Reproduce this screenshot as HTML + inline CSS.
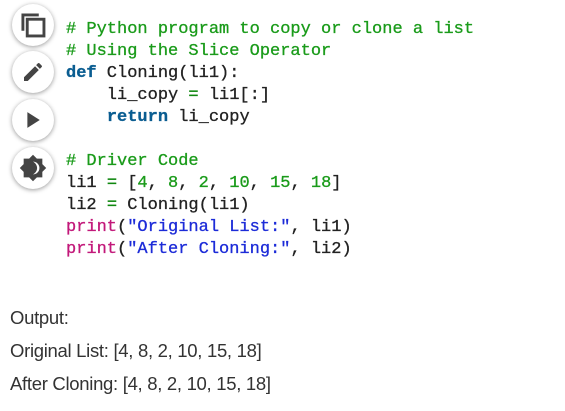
<!DOCTYPE html>
<html><head><style>
body{margin:0;width:565px;height:411px;background:#fff;position:relative;overflow:hidden}
.b{position:absolute;left:12px;width:42px;height:42px;border-radius:50%;background:#fff;box-shadow:0 1px 5px rgba(0,0,0,.4);display:flex;align-items:center;justify-content:center}
pre{position:absolute;left:66px;top:19px;margin:0;font:17px/22px "Liberation Mono",monospace;color:#222;-webkit-text-stroke:0.3px}
.c{color:#1a9b1a}.k{color:#0a5d91;font-weight:bold}.o{color:#118811}.n{color:#1a9b1a}.s{color:#1c2bd8}.f{color:#c2187a}
.out{position:absolute;left:10px;font:18.5px "Liberation Sans",sans-serif;color:#333;letter-spacing:-0.3px}
</style></head><body>
<div class="b" style="top:4px"><svg width="30" height="30" viewBox="0 0 26 26"><path d="M3 3h15v2.5H5.5V18H3z" fill="#444"/><rect x="8" y="8" width="14.5" height="14.5" fill="none" stroke="#444" stroke-width="2.5"/></svg></div>
<div class="b" style="top:51px"><svg width="24" height="24" viewBox="0 0 24 24"><path d="M3 17.25V21h3.75L17.81 9.94l-3.75-3.75L3 17.25zM20.71 7.04a1 1 0 000-1.41l-2.34-2.34a1 1 0 00-1.41 0l-1.83 1.83 3.75 3.75 1.83-1.83z" fill="#444"/></svg></div>
<div class="b" style="top:99px"><svg width="18" height="18" viewBox="0 0 16 16"><path d="M3 1l11 7-11 7z" fill="#444"/></svg></div>
<div class="b" style="top:147px"><svg width="28" height="28" viewBox="0 0 24 24"><path d="M20 8.69V4h-4.69L12 .69 8.69 4H4v4.69L.69 12 4 15.31V20h4.69L12 23.31 15.31 20H20v-4.69L23.31 12 20 8.69z" fill="#444"/><path d="M12 6.5c2.5 1.5 3.5 3.5 3.5 5.5s-1 4-3.5 5.5a5.5 5.5 0 000-11z" fill="#fff"/></svg></div>
<pre><span class="c"># Python program to copy or clone a list</span>
<span class="c"># Using the Slice Operator</span>
<span class="k">def</span> Cloning(li1):
    li_copy <span class="o">=</span> li1[:]
    <span class="k">return</span> li_copy

<span class="c"># Driver Code</span>
li1 <span class="o">=</span> [<span class="n">4</span>, <span class="n">8</span>, <span class="n">2</span>, <span class="n">10</span>, <span class="n">15</span>, <span class="n">18</span>]
li2 <span class="o">=</span> Cloning(li1)
<span class="f">print</span>(<span class="s">"Original List:"</span>, li1)
<span class="f">print</span>(<span class="s">"After Cloning:"</span>, li2)</pre>
<div class="out" style="top:307px">Output:</div>
<div class="out" style="top:340px">Original List: [4, 8, 2, 10, 15, 18]</div>
<div class="out" style="top:373px">After Cloning: [4, 8, 2, 10, 15, 18]</div>
</body></html>
